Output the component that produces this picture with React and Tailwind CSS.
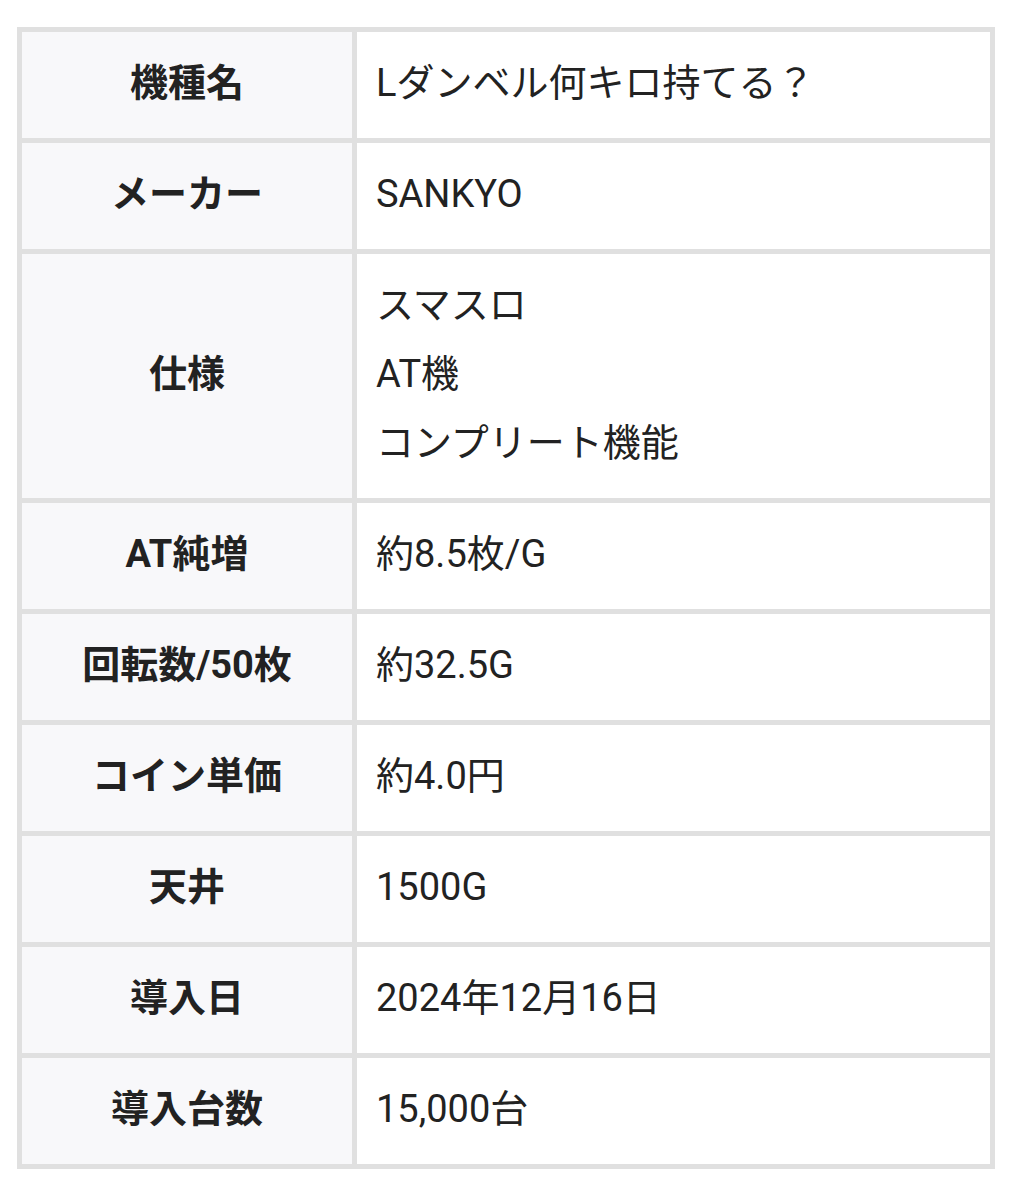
const rows = [
  { label: "機種名", value: ["Lダンベル何キロ持てる？"] },
  { label: "メーカー", value: ["SANKYO"] },
  { label: "仕様", value: ["スマスロ", "AT機", "コンプリート機能"] },
  { label: "AT純増", value: ["約8.5枚/G"] },
  { label: "回転数/50枚", value: ["約32.5G"] },
  { label: "コイン単価", value: ["約4.0円"] },
  { label: "天井", value: ["1500G"] },
  { label: "導入日", value: ["2024年12月16日"] },
  { label: "導入台数", value: ["15,000台"] },
];

const App = () => {
  return (
    <div className="bg-white min-h-[1186px] pt-[27px] pl-[17px] font-['Roboto','Noto_Sans_CJK_JP',sans-serif] text-[#222]">
      <div className="w-[978px] grid grid-cols-[330px_1fr] gap-[5px] p-[5px] bg-[#e0e0e0]">
        {rows.map((row) => (
          <div key={row.label} className="contents">
            <div className="flex items-center justify-center bg-[#f8f8fa] pt-[17px] pb-[20px] px-[19px] text-[38px] leading-[69px] font-bold">
              {row.label}
            </div>
            <div className="bg-white pt-[17px] pb-[20px] px-[19px] text-[38px] leading-[69px]">
              {row.value.map((v) => (
                <div key={v}>{v}</div>
              ))}
            </div>
          </div>
        ))}
      </div>
    </div>
  );
};

export default App;
